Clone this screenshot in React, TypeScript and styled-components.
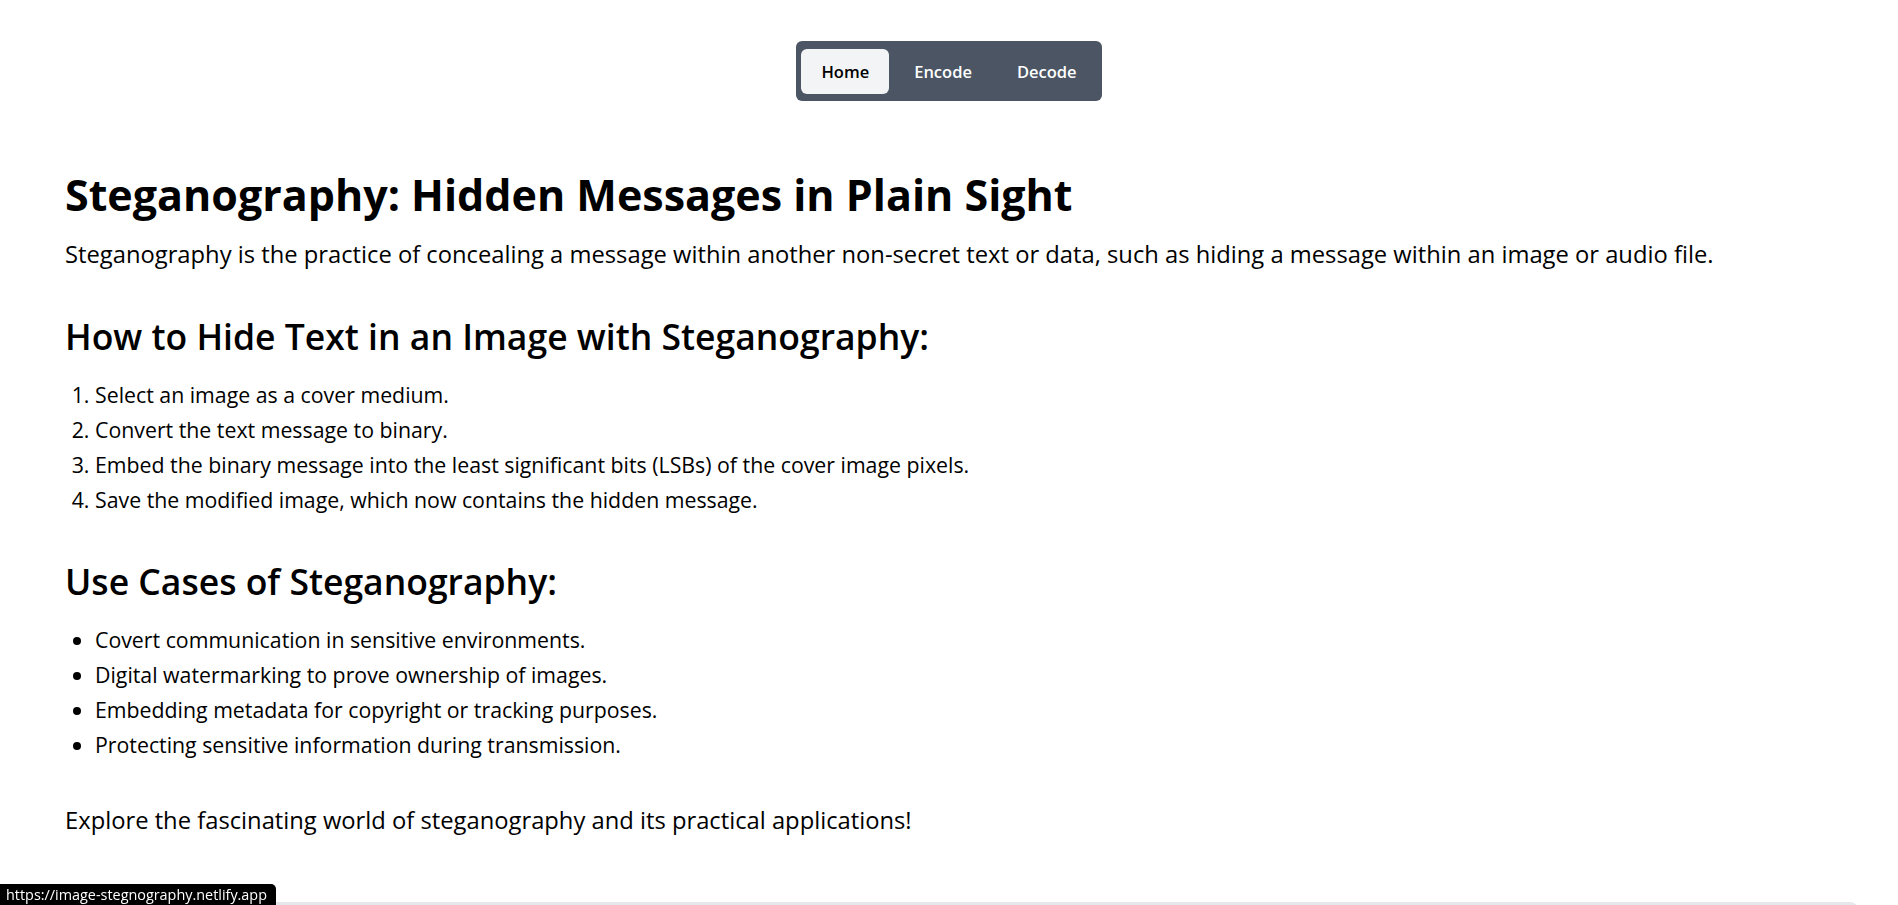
import React from 'react';
import styled, { createGlobalStyle } from 'styled-components';

const GlobalStyle = createGlobalStyle`
  html, body {
    margin: 0;
    padding: 0;
    background: #ffffff;
    overflow: hidden;
  }
  body {
    font-family: "Open Sans", "Noto Sans", "Liberation Sans", sans-serif;
    color: #000000;
  }
  * {
    box-sizing: border-box;
  }
`;

const Page = styled.div`
  min-height: 905px;
  display: flex;
  flex-direction: column;
`;

const NavBar = styled.nav`
  align-self: center;
  margin-top: 41px;
  display: flex;
  gap: 5px;
  padding: 8px 5px 7px;
  background: #4b5563;
  border-radius: 6px;
`;

const NavButton = styled.button<{ $active?: boolean }>`
  height: 45px;
  padding: 0 20px;
  border: none;
  border-radius: 6px;
  font-family: inherit;
  font-size: 16.5px;
  font-weight: 600;
  cursor: pointer;
  background: ${(p) => (p.$active ? '#f3f4f6' : 'transparent')};
  color: ${(p) => (p.$active ? '#000000' : '#ffffff')};
`;

const Main = styled.main`
  padding: 0 40px;
  display: flex;
  flex-direction: column;
`;

const Article = styled.article`
  padding: 0 25px;
  margin-top: 69px;
`;

const Title = styled.h1`
  margin: 0;
  font-size: 43px;
  line-height: 50px;
  font-weight: 700;
`;

const Text = styled.p<{ $gap: number }>`
  margin: ${(p) => p.$gap}px 0 0;
  font-size: 23.75px;
  line-height: 35px;
`;

const SectionTitle = styled.h2`
  margin: 42px 0 0;
  font-size: 35.5px;
  line-height: 45px;
  font-weight: 600;
`;

const List = styled.ul<{ $ordered?: boolean }>`
  margin: 18px 0 0;
  padding-left: 30px;
  list-style: ${(p) => (p.$ordered ? 'decimal' : 'disc')};
  font-size: 21.3px;
  line-height: 35px;
`;

const NextCard = styled.section`
  margin-top: 64px;
  height: 240px;
  background: #e5e7eb;
  border-radius: 8px;
`;

const StatusBubble = styled.div`
  position: fixed;
  left: 0;
  bottom: 0;
  height: 21px;
  padding: 0 9px 0 6px;
  background: #000000;
  color: #ffffff;
  font-size: 14.4px;
  line-height: 21px;
  border-top-right-radius: 5px;
`;

const steps = [
  'Select an image as a cover medium.',
  'Convert the text message to binary.',
  'Embed the binary message into the least significant bits (LSBs) of the cover image pixels.',
  'Save the modified image, which now contains the hidden message.',
];

const uses = [
  'Covert communication in sensitive environments.',
  'Digital watermarking to prove ownership of images.',
  'Embedding metadata for copyright or tracking purposes.',
  'Protecting sensitive information during transmission.',
];

const App: React.FC = () => {
  return (
    <Page>
      <GlobalStyle />
      <NavBar>
        <NavButton $active>Home</NavButton>
        <NavButton>Encode</NavButton>
        <NavButton>Decode</NavButton>
      </NavBar>
      <Main>
        <Article>
          <Title>Steganography: Hidden Messages in Plain Sight</Title>
          <Text $gap={17}>
            Steganography is the practice of concealing a message within another non-secret text or data, such as hiding a message within an image or audio file.
          </Text>
          <SectionTitle>How to Hide Text in an Image with Steganography:</SectionTitle>
          <List as="ol" $ordered>
            {steps.map((s) => <li key={s}>{s}</li>)}
          </List>
          <SectionTitle>Use Cases of Steganography:</SectionTitle>
          <List>
            {uses.map((s) => <li key={s}>{s}</li>)}
          </List>
          <Text $gap={41}>
            Explore the fascinating world of steganography and its practical applications!
          </Text>
        </Article>
        <NextCard />
      </Main>
      <StatusBubble>https://image-stegnography.netlify.app</StatusBubble>
    </Page>
  );
};

export default App;
